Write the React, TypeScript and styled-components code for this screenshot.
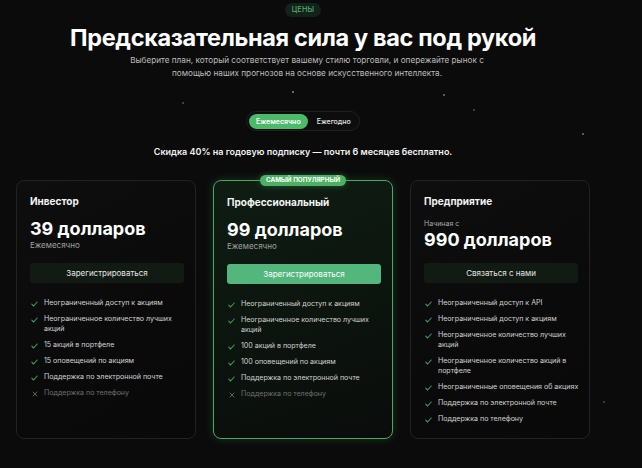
import React, { useState } from 'react';
import styled, { createGlobalStyle, css } from 'styled-components';

interface plan {
  name: string;
  prefix?: string;
  price: string;
  period?: string;
  button: string;
  popular?: boolean;
  features: { text: string; included: boolean }[];
}

const plans: plan[] = [
  {
    name: 'Инвестор',
    price: '39 долларов',
    period: 'Ежемесячно',
    button: 'Зарегистрироваться',
    features: [
      { text: 'Неограниченный доступ к акциям', included: true },
      { text: 'Неограниченное количество лучших акций', included: true },
      { text: '15 акций в портфеле', included: true },
      { text: '15 оповещений по акциям', included: true },
      { text: 'Поддержка по электронной почте', included: true },
      { text: 'Поддержка по телефону', included: false },
    ],
  },
  {
    name: 'Профессиональный',
    price: '99 долларов',
    period: 'Ежемесячно',
    button: 'Зарегистрироваться',
    popular: true,
    features: [
      { text: 'Неограниченный доступ к акциям', included: true },
      { text: 'Неограниченное количество лучших акций', included: true },
      { text: '100 акций в портфеле', included: true },
      { text: '100 оповещений по акциям', included: true },
      { text: 'Поддержка по электронной почте', included: true },
      { text: 'Поддержка по телефону', included: false },
    ],
  },
  {
    name: 'Предприятие',
    prefix: 'Начиная с',
    price: '990 долларов',
    button: 'Связаться с нами',
    features: [
      { text: 'Неограниченный доступ к API', included: true },
      { text: 'Неограниченный доступ к акциям', included: true },
      { text: 'Неограниченное количество лучших акций', included: true },
      { text: 'Неограниченное количество акций в портфеле', included: true },
      { text: 'Неограниченные оповещения об акциях', included: true },
      { text: 'Поддержка по электронной почте', included: true },
      { text: 'Поддержка по телефону', included: true },
    ],
  },
];

const Check = () => (
  <svg width="7" height="6" viewBox="0 0 7 6">
    <polyline points="0.8,3.2 2.6,5 6.2,1" fill="none" stroke="#3f9d55" strokeWidth="1.1" strokeLinecap="round" strokeLinejoin="round" />
  </svg>
);

const Cross = () => (
  <svg width="6" height="6" viewBox="0 0 6 6">
    <path d="M1 1 L5 5 M5 1 L1 5" stroke="#6a6a6a" strokeWidth="0.9" strokeLinecap="round" />
  </svg>
);

const App = () => {
  const [yearly, setYearly] = useState(false);

  return (
    <>
      <GlobalStyle />
      <Page>
        <Badge>ЦЕНЫ</Badge>
        <Title>Предсказательная сила у вас под рукой</Title>
        <Subtitle>
          Выберите план, который соответствует вашему стилю торговли, и опережайте рынок с помощью наших
          прогнозов на основе искусственного интеллекта.
        </Subtitle>
        <Toggle>
          <ToggleButton $active={!yearly} onClick={() => setYearly(false)}>
            Ежемесячно
          </ToggleButton>
          <ToggleButton $active={yearly} onClick={() => setYearly(true)}>
            Ежегодно
          </ToggleButton>
        </Toggle>
        <Discount>Скидка 40% на годовую подписку — почти 6 месяцев бесплатно.</Discount>
        <Cards>
          {plans.map((p) => (
            <Card key={p.name} $popular={p.popular}>
              {p.popular && <Popular>САМЫЙ ПОПУЛЯРНЫЙ</Popular>}
              <PlanName>{p.name}</PlanName>
              {p.prefix && <Prefix>{p.prefix}</Prefix>}
              <Price $tight={!!p.prefix}>{p.price}</Price>
              {p.period && <Period>{p.period}</Period>}
              <CardButton $primary={p.popular}>{p.button}</CardButton>
              <Features>
                {p.features.map((f) => (
                  <Feature key={f.text} $included={f.included}>
                    <FeatureIcon>{f.included ? <Check /> : <Cross />}</FeatureIcon>
                    <span>{f.text}</span>
                  </Feature>
                ))}
              </Features>
            </Card>
          ))}
        </Cards>
      </Page>
    </>
  );
};

export default App;

const GlobalStyle = createGlobalStyle`
  html, body {
    margin: 0;
    padding: 0;
    background-color: #0b0b0b;
    background-image:
      radial-gradient(circle at 293px 92px, #8a8a8a 0.6px, transparent 1px),
      radial-gradient(circle at 444px 95px, #777 0.6px, transparent 1px),
      radial-gradient(circle at 183px 103px, #666 0.5px, transparent 1px),
      radial-gradient(circle at 474px 110px, #666 0.5px, transparent 1px),
      radial-gradient(circle at 583px 134px, #777 0.6px, transparent 1px),
      radial-gradient(circle at 604px 402px, #555 0.5px, transparent 1px);
    background-repeat: no-repeat;
    font-family: Inter, 'Noto Sans', sans-serif;
    color: #fff;
  }
  * { box-sizing: border-box; }
`;

const Page = styled.div`
  width: 606px;
  padding: 3px 16px 0;
  display: flex;
  flex-direction: column;
  align-items: center;
  min-height: 468px;
`;

const Badge = styled.div`
  height: 14px;
  padding: 0 7px;
  border-radius: 7px;
  background: #13221a;
  color: #4fae6a;
  font-size: 7.3px;
  font-weight: 500;
  line-height: 14px;
  letter-spacing: 0.2px;
`;

const Title = styled.h1`
  margin: 6px 0 0;
  font-size: 23.5px;
  line-height: 30px;
  font-weight: 700;
  letter-spacing: -0.35px;
  color: #fff;
  white-space: nowrap;
`;

const Subtitle = styled.p`
  margin: 1px 0 0 8px;
  max-width: 368px;
  font-size: 8.2px;
  line-height: 13px;
  color: #bdbdbd;
  text-align: center;
`;

const Toggle = styled.div`
  margin-top: 31px;
  display: flex;
  align-items: center;
  gap: 2px;
  width: 114px;
  height: 20px;
  padding: 0 2px;
  border: 1px solid #202020;
  border-radius: 10px;
  background: #0d0d0d;
`;

const ToggleButton = styled.button<{ $active?: boolean }>`
  height: 15px;
  padding: 0 7px;
  border: none;
  border-radius: 8px;
  font-family: inherit;
  font-size: 7px;
  font-weight: 500;
  cursor: pointer;
  color: #e6e6e6;
  background: transparent;
  ${(p) =>
    p.$active &&
    css`
      width: 60px;
      color: #fff;
      font-weight: 600;
      background: #4dba6a;
    `}
`;

const Discount = styled.div`
  margin-top: 15px;
  font-size: 9px;
  line-height: 12px;
  font-weight: 600;
  color: #f2f2f2;
`;

const Cards = styled.div`
  margin-top: 22px;
  display: flex;
  gap: 17px;
  align-items: stretch;
`;

const Card = styled.div<{ $popular?: boolean }>`
  position: relative;
  width: 180px;
  padding: 14px 9px 14px 13px;
  display: flex;
  flex-direction: column;
  border-radius: 8px;
  border: 1px solid #222;
  background: linear-gradient(150deg, #0e0e0e 0%, #0a0a0a 60%, #090909 100%);
  ${(p) =>
    p.$popular &&
    css`
      padding-top: 15px;
      border-color: #4aa862;
      background: linear-gradient(160deg, #0f1d13 0%, #0c140e 55%, #0a0c0b 100%);
      box-shadow: 0 0 10px rgba(74, 168, 98, 0.25);
    `}
`;

const Popular = styled.div`
  position: absolute;
  top: -6px;
  left: 50%;
  transform: translateX(-50%);
  height: 11px;
  padding: 0 6px;
  border-radius: 6px;
  background: #4caf62;
  color: #fff;
  font-size: 6.3px;
  font-weight: 700;
  line-height: 11px;
  white-space: nowrap;
  box-shadow: 0 0 6px rgba(76, 175, 98, 0.4);
`;

const PlanName = styled.div`
  font-size: 10px;
  line-height: 13px;
  font-weight: 700;
  color: #f4f4f4;
`;

const Prefix = styled.div`
  margin-top: 11px;
  font-size: 7px;
  line-height: 10px;
  color: #a8a8a8;
`;

const Price = styled.div<{ $tight?: boolean }>`
  margin-top: ${(p) => (p.$tight ? '0' : '10px')};
  font-size: 18px;
  line-height: 22px;
  font-weight: 700;
  color: #fff;
`;

const Period = styled.div`
  font-size: 8px;
  line-height: 11px;
  color: #a0a0a0;
`;

const CardButton = styled.button<{ $primary?: boolean }>`
  margin-top: 12px;
  height: 20px;
  width: calc(100% - 2px);
  border: none;
  border-radius: 3px;
  font-family: inherit;
  font-size: 8px;
  color: #e6e6e6;
  background: #121a14;
  cursor: pointer;
  ${(p) =>
    p.$primary &&
    css`
      color: #fff;
      background: #52b67d;
    `}
`;

const Features = styled.ul`
  list-style: none;
  margin: 15px 0 0;
  padding: 0;
  display: flex;
  flex-direction: column;
  gap: 6px;
`;

const Feature = styled.li<{ $included?: boolean }>`
  display: flex;
  align-items: flex-start;
  gap: 6px;
  padding-left: 1px;
  font-size: 7.1px;
  line-height: 10px;
  letter-spacing: -0.03px;
  color: ${(p) => (p.$included ? '#d2d2d2' : '#6f6f6f')};
`;

const FeatureIcon = styled.span`
  flex: 0 0 7px;
  display: flex;
  align-items: center;
  justify-content: center;
  height: 10px;
  padding-top: 2px;
`;
